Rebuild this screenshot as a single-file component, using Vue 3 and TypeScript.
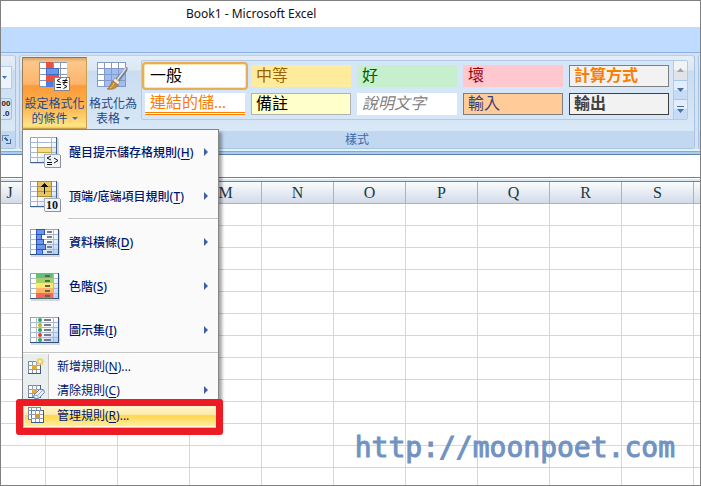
<script setup lang="ts">
import { ref } from 'vue'

interface StyleCell {
  name: string
  kind: string
}

interface RuleItem {
  label: string
  key: string
  icon: string
  more?: boolean
  sub?: boolean
}

const styleCells: StyleCell[] = [
  { name: '一般', kind: 'normal' },
  { name: '中等', kind: 'neutral' },
  { name: '好', kind: 'good' },
  { name: '壞', kind: 'bad' },
  { name: '計算方式', kind: 'calc' },
  { name: '連結的儲...', kind: 'linked' },
  { name: '備註', kind: 'note' },
  { name: '說明文字', kind: 'explain' },
  { name: '輸入', kind: 'entry' },
  { name: '輸出', kind: 'output' },
]

const highlightRules: RuleItem[] = [
  { label: '醒目提示儲存格規則', key: 'H', icon: 'highlight', sub: true },
  { label: '頂端/底端項目規則', key: 'T', icon: 'top', sub: true },
]
const visualRules: RuleItem[] = [
  { label: '資料橫條', key: 'D', icon: 'bars', sub: true },
  { label: '色階', key: 'S', icon: 'scale', sub: true },
  { label: '圖示集', key: 'I', icon: 'icons', sub: true },
]
const ruleCommands: RuleItem[] = [
  { label: '新增規則', key: 'N', icon: 'new', more: true },
  { label: '清除規則', key: 'C', icon: 'clear', sub: true },
  { label: '管理規則', key: 'R', icon: 'manage', more: true },
]

const columns: string[] = 'JKLMNOPQRS'.split('')
const rowCount = 40
const menuOpen = ref(true)
const selectedStyle = ref('normal')
const activeCommand = ref('manage')
const formula = ref('')
const dataBars: number[] = [9, 6, 8, 10, 7]
const scaleFills: string[] = ['#63be7b', '#a9cf6a', '#fde871', '#fdb567', '#ef6a5a']
const dotFills: string[] = ['#2fa84f', '#b5b51c', '#2fa84f', '#e8392b', '#2fa84f']
</script>

<template>
  <div class="window">
    <header class="title"><h1>Book1 - Microsoft Excel</h1></header>
    <div class="tabs"></div>

    <div class="ribbon">
      <section class="group numbers" aria-label="數值">
        <div class="group-body">
          <button class="format-drop" aria-label="數值格式"><svg width="5" height="3"><path d="M0 0h5L2.500 3z" fill="#4472ab" /></svg></button>
          <button class="decimals" aria-label="減少小數位數"><span>00</span><span>.0</span></button>
        </div>
        <button class="launcher" aria-label="儲存格格式">
          <svg width="9" height="9" shape-rendering="crispEdges">
            <path d="M0.500 6V0.500H7" fill="none" stroke="#6d8fba" />
            <path d="M3 3l3 3M8.500 4v4.500H4" fill="none" stroke="#3f6aa3" stroke-width="1.500" />
          </svg>
        </button>
      </section>

      <section class="group styles" aria-label="樣式">
        <div class="group-body">
          <div class="menu-anchor">
            <button class="big-button pressed" :aria-expanded="menuOpen" @click="menuOpen = !menuOpen">
              <svg width="32" height="32" viewBox="0 0 32 32" shape-rendering="crispEdges">
                <rect x="0" y="0" width="28" height="25" fill="#8797ba" />
                <g fill="#fff">
                  <rect v-for="n in 16" :key="n" :x="1 + ((n - 1) % 4) * 7" :y="1 + Math.floor((n - 1) / 4) * 6" width="6" height="5" />
                </g>
                <rect x="7" y="0" width="7" height="7" fill="#e8513f" />
                <rect x="7" y="6" width="13" height="7" fill="#3e6bc4" />
                <rect x="8" y="7" width="11" height="5" fill="#6d95ea" />
                <rect x="7" y="13" width="13" height="6" fill="#e8513f" />
                <rect x="7" y="19" width="7" height="6" fill="#4f7ddc" />
                <rect x="15" y="15" width="16" height="14" fill="#7d8796" />
                <rect x="16" y="16" width="14" height="12" fill="#f8fafc" />
                <g fill="none" stroke="#111" shape-rendering="auto">
                  <path d="M21.500 16.500l-3.500 2 3.500 2M17.500 22.500h4.500M17.500 25.500h4.500M23.500 18.500h5M23.500 20.500h5M27.500 16.500l-3 6M24.500 22.500l3.500 2-3.500 2" />
                </g>
              </svg>
              <span class="caption">設定格式化</span>
              <span class="caption">的條件<i class="caret"></i></span>
            </button>

            <div v-if="menuOpen" class="menu" role="menu">
              <template v-for="(block, b) in [highlightRules, visualRules]" :key="b">
                <button v-for="item in block" :key="item.key" class="item large" role="menuitem">
                  <svg class="item-icon" width="32" height="32" viewBox="0 0 32 32" shape-rendering="crispEdges">
                    <defs>
                      <linearGradient :id="'sheet-' + item.icon" x1="0" y1="0" x2="1" y2="1">
                        <stop offset="0.500" stop-color="#fff" />
                        <stop offset="1" stop-color="#a9c8f0" />
                      </linearGradient>
                    </defs>
                    <template v-if="b === 0">
                      <rect x="1" y="2" width="28" height="26" fill="#d5d9df" />
                      <rect x="0.500" y="1.500" width="26" height="25" :fill="`url(#sheet-${item.icon})`" stroke="#91a5c2" />
                      <path d="M7.500 1v25M21.500 1v25M0 6.500h27M0 11.500h27M0 16.500h27M0 21.500h27" stroke="#aab8d0" fill="none" />
                      <path d="M0 26.500h27M26.500 1v26" stroke="#44648e" fill="none" />
                      <template v-if="item.icon === 'highlight'">
                        <rect x="7" y="11" width="15" height="6" fill="#c4a540" />
                        <rect x="8" y="12" width="13" height="4" fill="#f6dc80" />
                      </template>
                      <template v-else>
                        <rect x="7" y="1" width="15" height="16" fill="#a98a35" />
                        <path d="M8 2h13v14H8z" fill="#e8c660" />
                        <path d="M8 6.500h13M8 11.500h13" stroke="#b7953e" />
                        <path d="M14.500 4v10" stroke="#111" />
                        <path d="M11 7l3.500-4L18 7z" fill="#111" />
                      </template>
                      <rect x="15" y="19" width="16" height="13" fill="#8a94a0" />
                      <rect x="14" y="18" width="16" height="13" fill="#f1f5f9" />
                      <path d="M14.500 31V18.500H30" fill="none" stroke="#9fb0c6" />
                      <g v-if="item.icon === 'highlight'" fill="none" stroke="#111" shape-rendering="auto">
                        <path d="M21 20l-4 2 4 2M17 26.500h5M17 28.500h5M24 22l4 2.500-4 2.500" />
                      </g>
                      <text v-else x="22" y="29" text-anchor="middle" class="ten">10</text>
                    </template>
                    <template v-else>
                      <rect x="1" y="4" width="29" height="27" fill="#d5d9df" />
                      <rect x="0.500" y="3.500" width="28" height="25" :fill="`url(#sheet-${item.icon})`" stroke="#91a5c2" />
                      <path d="M6.500 3v25M23.500 3v25M0 8.500h28M0 13.500h28M0 18.500h28M0 23.500h28" stroke="#aab8d0" fill="none" />
                      <path d="M0 28.500h29M28.500 3v26" stroke="#2f527f" fill="none" />
                      <template v-if="item.icon === 'bars'">
                        <g v-for="(w, i) in dataBars" :key="i">
                          <rect x="6" :y="3 + i * 5" :width="w" height="6" fill="#2e56ad" />
                          <rect x="7" :y="4 + i * 5" :width="w - 2" height="4" fill="#6b97ee" />
                          <rect x="17" :y="5 + i * 5" width="5" height="2" fill="#767d88" />
                        </g>
                      </template>
                      <template v-else-if="item.icon === 'scale'">
                        <g v-for="(c, i) in scaleFills" :key="c">
                          <rect x="6" :y="3 + i * 5" width="17" height="5" :fill="c" />
                          <rect x="6" :y="8 + i * 5" width="17" height="1" fill="#6d7b55" opacity="0.500" />
                          <rect x="15" :y="5 + i * 5" width="5" height="2" fill="#5d6554" />
                        </g>
                      </template>
                      <template v-else>
                        <g v-for="(c, i) in dotFills" :key="i">
                          <circle cx="10" :cy="6 + i * 5" r="2" :fill="c" shape-rendering="auto" />
                          <rect x="14" :y="5 + i * 5" width="7" height="2" fill="#767d88" />
                        </g>
                      </template>
                    </template>
                  </svg>
                  <span>{{ item.label }}(<u>{{ item.key }}</u>)</span>
                  <svg v-if="item.sub" class="arrow" width="4" height="8"><path d="M0 0l4 4-4 4z" fill="#3f5fa6" /></svg>
                </button>
                <hr :class="{ inset: b === 0 }" />
              </template>

              <div class="commands">
                <button
                  v-for="item in ruleCommands"
                  :key="item.key"
                  class="item small"
                  :class="{ active: activeCommand === item.icon, marked: item.icon === 'manage' }"
                  role="menuitem"
                  @mouseenter="activeCommand = item.icon"
                >
                  <svg class="item-icon" width="18" height="18" viewBox="0 0 18 18" shape-rendering="crispEdges">
                    <g v-if="item.icon !== 'manage'">
                      <rect x="1.500" y="4.500" width="12" height="12" fill="#fbfdff" stroke="#7689ab" />
                      <path d="M5.500 4v13M9.500 4v13M1 8.500h13M1 12.500h13" stroke="#8c9dbb" />
                      <rect x="5" y="8" width="5" height="4" fill="#e5a83c" />
                      <path d="M1 16.500h13M13.500 4v13" stroke="#3f5b88" />
                    </g>
                    <g v-if="item.icon === 'new'" shape-rendering="auto">
                      <path d="M13 0l1 2.500L16.500 1 15.500 3.500 18 4.500l-2.500 1 1 2.500L14 7l-1 2-1-2-2.500 1 1-2.500L8 4.500l2.500-1L9.500 1 12 2.500z" fill="#f3cb45" />
                      <circle cx="13" cy="4.500" r="1.500" fill="#fff7cf" />
                    </g>
                    <g v-else-if="item.icon === 'clear'" shape-rendering="auto">
                      <path d="M6.500 14.500l6-6h4l1 3-6 6h-4z" fill="#e9eff8" stroke="#6d82a8" />
                      <path d="M7 14.500h3.500l6-6M10.500 14.500l1 3" fill="none" stroke="#9cafd0" />
                    </g>
                    <g v-else-if="item.icon === 'manage'">
                      <rect x="1.500" y="1.500" width="12" height="12" fill="#fbfdff" stroke="#7689ab" />
                      <path d="M4.500 1v13M9.500 1v13M1 4.500h13M1 8.500h13" stroke="#8c9dbb" />
                      <rect x="4.500" y="4.500" width="12" height="12" fill="#fbfdff" stroke="#667ba2" />
                      <path d="M8.500 4v13M12.500 4v13M4 8.500h13M4 12.500h13" stroke="#8c9dbb" />
                      <rect x="8" y="8" width="5" height="4" fill="#e0952f" />
                      <path d="M4 16.500h13M16.500 4v13" stroke="#3f5b88" />
                    </g>
                  </svg>
                  <span>{{ item.label }}(<u>{{ item.key }}</u>){{ item.more ? '...' : '' }}</span>
                  <svg v-if="item.sub" class="arrow" width="4" height="8"><path d="M0 0l4 4-4 4z" fill="#3f5fa6" /></svg>
                </button>
              </div>
            </div>
          </div>

          <button class="big-button table-format">
            <svg width="32" height="32" viewBox="0 0 32 32" shape-rendering="crispEdges">
              <rect x="0" y="0" width="29" height="25" fill="#8499c4" />
              <g fill="#fff">
                <rect v-for="n in 16" :key="n" :x="1 + ((n - 1) % 4) * 7" :y="1 + Math.floor((n - 1) / 4) * 6" width="6" height="5" />
              </g>
              <g fill="#9fbdf5">
                <rect v-for="n in 9" :key="n" :x="8 + ((n - 1) % 3) * 7" :y="7 + Math.floor((n - 1) / 3) * 6" width="6" height="5" />
              </g>
              <g shape-rendering="auto">
                <path d="M29 5c2 0 2 2 1 4l-8 11-4-3z" fill="#7b8190" />
                <path d="M29 6l-9 12" stroke="#dfe5ee" stroke-width="1.500" />
                <path d="M18 16l5 4-2 3-5-4z" fill="#f2e9d6" stroke="#8c7d68" stroke-width="0.500" />
                <path d="M16 19l5 4c-2 4-6 5-11 4 3-1 3-5 6-8z" fill="#c58b35" stroke="#7f571f" stroke-width="0.500" />
                <path d="M17 21c-1 3-2 4-4 5" stroke="#f0c978" fill="none" />
              </g>
            </svg>
            <span class="caption">格式化為</span>
            <span class="caption">表格<i class="caret"></i></span>
          </button>

          <div class="gallery">
            <div class="cells">
              <button
                v-for="cell in styleCells"
                :key="cell.kind"
                class="cell"
                :class="[cell.kind, { selected: selectedStyle === cell.kind }]"
                @click="selectedStyle = cell.kind"
              >{{ cell.name }}</button>
            </div>
            <div class="scroller">
              <button class="off" aria-label="上一列"><svg width="7" height="4"><path d="M0 4h7L3.500 0z" fill="#a3a3a3" /></svg></button>
              <button aria-label="下一列"><svg width="7" height="4"><path d="M0 0h7L3.500 4z" fill="#4472ab" /></svg></button>
              <button aria-label="其他"><svg width="7" height="7"><path d="M0 0h7v1H0zM0 3h7L3.500 7z" fill="#4472ab" /></svg></button>
            </div>
          </div>
        </div>
        <h2>樣式</h2>
      </section>

      <section class="group next" aria-label="儲存格">
        <div class="group-body"></div>
        <div class="strip"></div>
      </section>
    </div>

    <div class="ribbon-edge"></div>
    <input v-model="formula" class="formula" type="text" aria-label="資料編輯列" />
    <div class="formula-edge"></div>

    <main class="sheet">
      <table>
        <colgroup>
          <col v-for="c in columns" :key="c" class="column" />
          <col />
        </colgroup>
        <thead>
          <tr><th v-for="c in columns" :key="c" scope="col">{{ c }}</th><th class="rest"></th></tr>
        </thead>
        <tbody>
          <tr v-for="r in rowCount" :key="r"><td v-for="c in columns" :key="c"></td><td class="rest"></td></tr>
        </tbody>
      </table>
      <a class="watermark" href="http://moonpoet.com">http://moonpoet.com</a>
    </main>
  </div>
</template>

<style>
body {
  margin: 0;
}
</style>

<style scoped>
.window {
  box-sizing: border-box;
  height: 100vh;
  display: flex;
  flex-direction: column;
  overflow: hidden;
  border: 1px solid #808080;
  background: #fff;
  font-family: "Noto Sans", "Noto Sans CJK TC", sans-serif;
  font-size: 12px;
}
button {
  box-sizing: border-box;
  margin: 0;
  padding: 0;
  border: 0;
  background: none;
  font: inherit;
  color: inherit;
}
svg {
  display: block;
  flex: none;
}
.title {
  flex: none;
  height: 26px;
  padding-left: 185px;
}
.title h1 {
  margin: 0;
  font-size: 12px;
  font-weight: 400;
  line-height: 25px;
  color: #111;
}
.tabs {
  flex: none;
  height: 25px;
  background: #bfdbff;
  border-bottom: 1px solid #8db2e3;
}
.ribbon {
  flex: none;
  display: flex;
  gap: 3px;
  padding-top: 2px;
  background: #d3e2f4;
}
.group {
  box-sizing: border-box;
  display: flex;
  flex-direction: column;
  height: 94px;
  border: 1px solid #a9c3e2;
  border-top-color: #c0cfe0;
  border-radius: 3px;
  background: linear-gradient(#e4edf7 0, #dce7f4 14px, #cadcf0 15px, #d9e8f7 74px);
}
.group-body {
  flex: 1;
  display: flex;
  padding: 1px 6px 0 2px;
}
.numbers {
  width: 15px;
  border-left: 0;
  border-radius: 0 3px 3px 0;
}
.numbers .group-body {
  flex-direction: column;
  gap: 9px;
  padding: 10px 3px 0 0;
}
.format-drop {
  height: 23px;
  padding-left: 1px;
  border: 1px solid #b4cce8;
  border-left: 0;
  background: #edf4fc;
}
.decimals {
  display: flex;
  flex-direction: column;
  height: 22px;
  border: 1px solid #a5bfdf;
  border-left: 0;
  border-radius: 0 3px 3px 0;
  font-family: "Liberation Sans", sans-serif;
  font-size: 8px;
  font-weight: 700;
  line-height: 10px;
  color: #222;
}
.launcher {
  height: 17px;
  padding-left: 1px;
  background: #c1d8f0;
}
.styles {
  flex: 1;
}
.styles h2 {
  margin: 0;
  height: 17px;
  background: #c1d8f0;
  color: #3e6aaa;
  font-size: 12px;
  font-weight: 400;
  line-height: 17px;
  text-align: center;
}
.next {
  width: 2px;
  border-right: 0;
  border-radius: 3px 0 0 3px;
}
.next .group-body {
  padding: 0;
}
.strip {
  height: 17px;
  background: #c1d8f0;
}
.menu-anchor {
  position: relative;
}
.big-button {
  display: flex;
  flex-direction: column;
  align-items: center;
  width: 52px;
  height: 72px;
  padding-top: 5px;
  line-height: 15px;
  color: #1f4a8c;
}
.pressed {
  width: 65px;
  padding-top: 4px;
  border: 1px solid #c9a04c;
  border-top: 1px solid #8b7654;
  border-left-color: #9a7f58;
  background: linear-gradient(#d9a56a 0, #fbc78a 4px, #fdb46c 26px, #fb9a3a 28px, #fdb64e 50px, #fee58a 68px, #f6c82e 70px);
}
.big-button svg {
  margin-bottom: 2px;
}
.caption {
  display: flex;
  align-items: center;
  white-space: nowrap;
}
.caret {
  margin-left: 4px;
  border: 3px solid transparent;
  border-top-color: #4472ab;
  border-bottom: 0;
}
.gallery {
  display: flex;
  flex: 1;
  height: 60px;
  box-sizing: border-box;
  margin: 3px 0 0 2px;
  border: 1px solid #b3cbe8;
  border-radius: 2px;
  background: #d4e6f8;
}
.cells {
  flex: 1;
  display: grid;
  grid-template-columns: repeat(5, minmax(0, 1fr));
  grid-auto-rows: 22px;
  gap: 6px;
  padding: 4px 4px 4px 3px;
}
.cell {
  padding-left: 5px;
  font-family: "Liberation Serif", "Noto Sans CJK TC", sans-serif;
  font-size: 16px;
  line-height: 20px;
  text-align: left;
  white-space: nowrap;
  background: #fff;
  border: 0 solid;
  color: #000;
}
.selected {
  outline: 2px solid #e9ad56;
  outline-offset: 1px;
  box-shadow: 0 0 0 1px #fbe5b0;
  border-radius: 1px;
}
.neutral { background: #ffeb9c; color: #9c6500; }
.good { background: #c6efce; color: #006100; }
.bad { background: #ffc7ce; color: #9c0006; }
.calc { background: #f2f2f2; color: #fa7d00; border: 1px solid #7f7f7f; font-weight: 700; line-height: 18px; padding-left: 4px; }
.linked { color: #fa7d00; border-bottom: 3px double #ff8001; line-height: 19px; }
.note { background: #ffffcc; border: 1px solid #b2b2b2; line-height: 18px; padding-left: 4px; }
.explain { color: #7f7f7f; font-style: italic; }
.entry { background: #ffcc99; color: #3f3f76; border: 1px solid #7f7f7f; line-height: 18px; padding-left: 4px; }
.output { background: #f2f2f2; color: #3f3f3f; border: 1px solid #3f3f3f; font-weight: 700; line-height: 18px; padding-left: 4px; }
.scroller {
  display: flex;
  flex-direction: column;
  width: 13px;
  border-left: 1px solid #b3cbe8;
}
.scroller button {
  flex: 1;
  display: flex;
  align-items: center;
  justify-content: center;
  background: linear-gradient(#e3edfb 50%, #c8dbf5 50%);
}
.scroller button + button {
  border-top: 1px solid #a9c6ea;
}
.scroller .off {
  background: linear-gradient(#f1f3f5 50%, #e0e3e7 50%);
}
.menu {
  position: absolute;
  z-index: 2;
  top: 72px;
  left: 0;
  box-sizing: border-box;
  width: 197px;
  border: 1px solid #868686;
  background: #fafafa;
  box-shadow: 3px 3px 3px rgba(0, 0, 0, 0.35);
  color: #00156e;
}
.item {
  display: flex;
  align-items: center;
  width: 100%;
  height: 44px;
  padding: 0 10px 0 7px;
  white-space: nowrap;
  text-align: left;
}
.large {
  font-weight: 500;
}
.large .item-icon {
  margin-right: 7px;
}
.item u {
  text-underline-offset: 2px;
}
.arrow {
  margin-left: auto;
}
hr {
  margin: 0;
  height: 0;
  border: 0;
  border-top: 1px solid #c5c5c5;
  border-bottom: 1px solid #fff;
}
.inset {
  margin-left: 45px;
}
.commands {
  background: linear-gradient(90deg, #e9eeee 25px, #c5c5c5 25px, #c5c5c5 26px, #fafafa 26px);
}
.small {
  height: 24px;
  padding-left: 4px;
}
.small .item-icon {
  margin-right: 12px;
}
.active {
  box-shadow: inset 0 0 0 1px #d9c387, inset 0 0 0 2px #fff7d6;
  background: linear-gradient(#fffbe8 0, #ffeba8 48%, #ffd748 50%, #ffe27a 75%, #fff3b0 100%);
}
.marked {
  position: relative;
  height: 26px;
}
.marked::after {
  content: "";
  position: absolute;
  inset: -3px -5px -7px -7px;
  border: 7px solid #ed1c24;
  border-radius: 3px;
  pointer-events: none;
}
.ribbon-edge {
  flex: none;
  height: 5px;
  border-bottom: 1px solid #5b84b1;
  background: linear-gradient(#dff5fd 2px, #87aacf 2px, #87aacf 3px, #aecbe9 3px);
}
.formula {
  flex: none;
  box-sizing: border-box;
  width: 100%;
  height: 22px;
  padding: 0 4px;
  border: 0;
  outline: 0;
  background: #fff;
}
.formula-edge {
  flex: none;
  height: 3px;
  border-top: 1px solid #5b84b1;
  border-bottom: 1px solid #5b84b1;
  background: linear-gradient(#fff 1px, #dbe8f7 1px);
}
.sheet {
  flex: 1;
  min-height: 0;
  position: relative;
  overflow: hidden;
}
table {
  width: calc(100% + 27px);
  margin-left: -27px;
  border-collapse: separate;
  border-spacing: 0;
  table-layout: fixed;
}
.column {
  width: 72px;
}
th,
td {
  box-sizing: border-box;
  height: 22px;
  padding: 0;
  border-right: 1px solid #d0d7e5;
  border-bottom: 1px solid #d0d7e5;
}
th {
  border-color: #9eb6ce;
  background: linear-gradient(#f9fcfd, #d3dbe9);
  color: #22393b;
  font-family: "Liberation Serif", serif;
  font-size: 16px;
  font-weight: 400;
  line-height: 21px;
}
.rest {
  border-right: 0;
}
.watermark {
  position: absolute;
  right: 25px;
  bottom: 21px;
  color: #7193c2;
  font-family: "DejaVu Sans Mono", monospace;
  font-size: 28px;
  line-height: 33px;
  text-decoration: none;
  -webkit-text-stroke: 1px #7193c2;
}
.ten {
  font: 700 12px "Liberation Serif", serif;
  fill: #111;
}
</style>
